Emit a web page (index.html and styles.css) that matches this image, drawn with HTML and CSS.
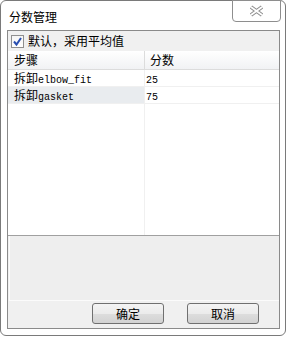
FILE: index.html
```html
<!DOCTYPE html>
<html lang="zh-CN">
<head>
    <meta charset="UTF-8">
    <title>分数管理</title>
    <link rel="stylesheet" href="styles.css">
</head>
<body>
    <div class="window">
        <div class="titlebar">
            <span class="title">分数管理</span>
            <button class="close" type="button">
                <svg width="17" height="12" viewBox="0 0 17 12">
                    <path d="M3 2 L14 10 M14 2 L3 10" stroke="#8c8c8c" stroke-width="3.8" fill="none"/>
                    <path d="M3 2 L14 10 M14 2 L3 10" stroke="#ffffff" stroke-width="1.8" fill="none"/>
                </svg>
            </button>
        </div>
        <div class="client">
            <label class="check-row">
                <span class="checkbox">
                    <svg width="11" height="11" viewBox="0 0 11 11">
                        <path d="M2 5.5 L4.5 8.5 L9 2" stroke="#2a4fb0" stroke-width="2" fill="none"/>
                    </svg>
                </span>
                默认，采用平均值
            </label>
            <div class="table">
                <div class="row head">
                    <div class="cell c1">步骤</div>
                    <div class="cell c2">分数</div>
                </div>
                <div class="row">
                    <div class="cell c1">拆卸<span class="latin">elbow_fit</span></div>
                    <div class="cell c2"><span class="latin">25</span></div>
                </div>
                <div class="row">
                    <div class="cell c1 selected">拆卸<span class="latin">gasket</span></div>
                    <div class="cell c2"><span class="latin">75</span></div>
                </div>
                <div class="row filler">
                    <div class="cell c1"></div>
                    <div class="cell c2"></div>
                </div>
            </div>
            <div class="panel"></div>
            <div class="buttons">
                <button class="btn" type="button">确定</button>
                <button class="btn" type="button">取消</button>
            </div>
        </div>
    </div>
</body>
</html>
```

FILE: styles.css
```css
body {
    margin: 0;
    background-color: #ffffff;
    font-family: "Noto Sans CJK SC", "DejaVu Sans", sans-serif;
    font-size: 12px;
    color: #000000;
}

.window {
    box-sizing: border-box;
    width: 286px;
    height: 336px;
    border: 1px solid #7a7a7a;
    border-radius: 6px;
    padding: 0 5px 6px 6px;
    background-color: #ffffff;
    display: flex;
    flex-direction: column;
}

.titlebar {
    height: 29px;
    display: flex;
    justify-content: space-between;
    align-items: flex-start;
}

.title {
    margin-left: 2px;
    padding-top: 8px;
    line-height: 16px;
}

.close {
    box-sizing: border-box;
    width: 49px;
    height: 22px;
    margin-top: -1px;
    margin-right: -1px;
    padding: 0;
    border: 1px solid #8e8e8e;
    border-radius: 0 0 4px 4px;
    background-color: #ffffff;
    display: flex;
    justify-content: center;
    align-items: center;
}

.client {
    flex: 1;
    border: 1px solid #8a8a8a;
    background-color: #f0f0f0;
    display: flex;
    flex-direction: column;
}

.check-row {
    height: 20px;
    display: flex;
    align-items: center;
    gap: 4px;
    padding-left: 3px;
    line-height: 20px;
}

.checkbox {
    box-sizing: border-box;
    width: 13px;
    height: 13px;
    border: 1px solid #8f8f8f;
    background: linear-gradient(#f4f4f4, #ffffff);
    display: flex;
    justify-content: center;
    align-items: center;
}

.table {
    height: 184px;
    border-bottom: 1px solid #a0a0a0;
    background-color: #ffffff;
    display: flex;
    flex-direction: column;
}

.row {
    display: flex;
    height: 16px;
    border-bottom: 1px solid #f0f0f0;
    line-height: 16px;
}

.row.head {
    height: 18px;
    line-height: 18px;
    background: linear-gradient(#ffffff, #f1f2f4);
    border-bottom: 1px solid #dcdcdc;
}

.row.filler {
    flex: 1;
    border-bottom: none;
}

.cell {
    white-space: nowrap;
    overflow: hidden;
}

.c1 {
    width: 137px;
    padding-left: 6px;
    box-sizing: border-box;
    border-right: 1px solid #f0f0f0;
}

.head .c1 {
    border-right-color: #dcdcdc;
}

.c2 {
    flex: 1;
    padding-left: 1px;
}

.head .c2 {
    padding-left: 5px;
}

.selected {
    background-color: #e9ecef;
}

.latin {
    font-family: "Liberation Mono", monospace;
    font-size: 10px;
}

.panel {
    height: 64px;
    margin-left: 1px;
    border: 1px solid #fbfbfb;
    border-top: none;
    border-right: none;
    background-color: #eeeeee;
}

.buttons {
    display: flex;
    justify-content: flex-end;
    gap: 23px;
    padding-right: 20px;
    margin-top: 2px;
}

.btn {
    box-sizing: border-box;
    width: 72px;
    height: 21px;
    padding: 0;
    border: 1px solid #707070;
    border-radius: 3px;
    background: linear-gradient(#f4f4f4 0%, #ebebeb 50%, #dddddd 51%, #d2d2d2 100%);
    font-family: "Noto Sans CJK SC", sans-serif;
    font-size: 12px;
    color: #000000;
}
```
